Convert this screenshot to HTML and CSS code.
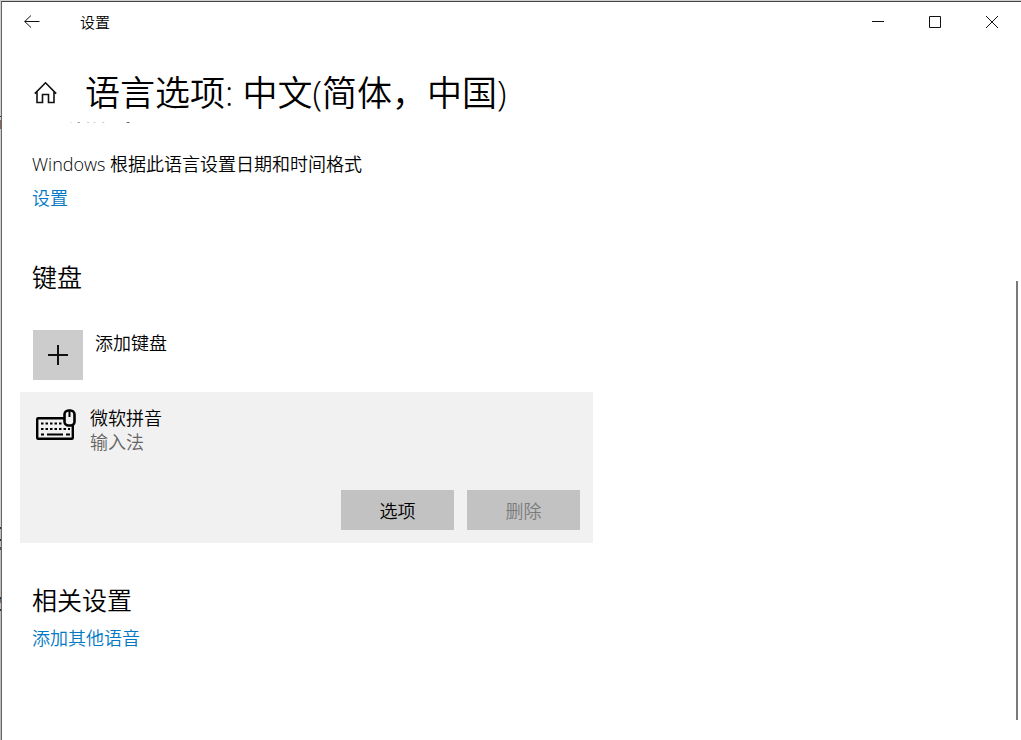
FILE: index.html
```html
<!DOCTYPE html>
<html lang="zh-CN">
<head>
  <meta charset="UTF-8" />
  <title>设置</title>
  <link rel="stylesheet" href="styles.css">
</head>
<body>

<div class="window">
  <header class="titlebar">
    <button class="back" aria-label="返回">
      <svg width="16" height="14" viewBox="0 0 16 14"><path d="M7 0.5L0.7 6.5L7 12.5M0.7 6.5H15.5" /></svg>
    </button>
    <span class="app-name">设置</span>
    <div class="controls">
      <button aria-label="最小化">
        <svg width="12" height="12" viewBox="0 0 12 12"><path d="M0 5.5H12" /></svg>
      </button>
      <button aria-label="最大化">
        <svg width="12" height="12" viewBox="0 0 12 12"><path d="M0.5 0.5H11.5V11.5H0.5Z" /></svg>
      </button>
      <button aria-label="关闭">
        <svg width="12" height="12" viewBox="0 0 12 12"><path d="M0 0L12 12M12 0L0 12" /></svg>
      </button>
    </div>
  </header>

  <div class="page-head">
    <button class="home" aria-label="主页">
      <svg width="24" height="24" viewBox="0 0 24 24"><path d="M0.8 12.6L11.5 1.8L22.2 12.6M3 11V21.5H8.5V13.5H14.5V21.5H20V11" /></svg>
    </button>
    <h1>语言选项: 中文(简体，中国)</h1>
  </div>

  <main class="content">
    <section class="region">
      <h2>区域格式</h2>
      <p>Windows 根据此语言设置日期和时间格式</p>
      <a href="#">设置</a>
    </section>

    <section class="keyboards">
      <h2>键盘</h2>
      <button class="add">
        <span class="add-tile">
          <svg width="20" height="20" viewBox="0 0 20 20"><path d="M10 0V20M0 10H20" /></svg>
        </span>
        <span>添加键盘</span>
      </button>

      <div class="card">
        <div class="ime">
          <svg class="keyboard" width="42" height="32" viewBox="0 0 42 32">
            <rect class="body" x="2.2" y="9.2" width="35.6" height="20.6" rx="1" />
            <path class="keys" d="M6 14.5H28M6 20H35" />
            <path class="space" d="M6 25.5H9M12 25.5H28M31 25.5H35" />
            <rect class="mouse" x="29.5" y="1.5" width="10" height="15" rx="4" />
            <path class="wheel" d="M34.5 2V8" />
          </svg>
          <div>
            <div>微软拼音</div>
            <div class="kind">输入法</div>
          </div>
        </div>
        <div class="actions">
          <button>选项</button>
          <button disabled>删除</button>
        </div>
      </div>
    </section>

    <section class="related">
      <h2>相关设置</h2>
      <a href="#">添加其他语音</a>
    </section>

    <div class="scrollbar"></div>
  </main>
</div>

</body>
</html>
```
FILE: styles.css
```css
* { box-sizing: border-box; }
html, body {
  margin: 0;
  height: 100%;
}
body {
  padding: 1px 0 0 1px;
  /* bits of the window behind show along the left edge */
  background: linear-gradient(
    #cfcfcf 116px, #333 116px, #333 117px, #cfcfcf 117px, #cfcfcf 120px,
    #8a6a5c 120px, #8a6a5c 129px, #cfcfcf 129px, #cfcfcf 527px,
    #333 527px, #333 529px, #bbb 529px, #bbb 539px, #333 539px, #333 541px,
    #bbb 541px, #bbb 547px, #555 547px, #555 550px, #bbb 550px, #bbb 597px,
    #333 597px, #333 599px, #3a7ab0 599px, #3a7ab0 601px, #b06040 601px,
    #b06040 603px, #bbb 603px, #bbb 609px, #333 609px, #333 611px, #bbb 611px);
  color: #000;
  font-family: "Open Sans", "Noto Sans CJK SC", sans-serif;
  font-size: 18px;
  line-height: 24px;
  font-weight: 350;
  overflow: hidden;
}
h1, h2, p { margin: 0; font-weight: inherit; }
button {
  padding: 0;
  border: none;
  background: none;
  color: inherit;
  font: inherit;
}
svg {
  display: block;
  fill: none;
  stroke: #111;
}
a {
  color: #0078c4;
  text-decoration: none;
}
.window {
  display: flex;
  flex-direction: column;
  height: 100%;
  border-top: 1px solid #444;
  border-left: 1px solid #666;
  background-color: #fff;
}
.titlebar {
  display: flex;
  align-items: center;
  height: 40px;
  padding: 0 1px 0 22px;
}
.app-name {
  margin-left: 40px;
  font-size: 15px;
}
.controls {
  display: flex;
  margin-left: auto;
}
.controls button {
  display: grid;
  place-items: center;
  width: 57px;
  height: 40px;
}
.page-head {
  display: flex;
  align-items: center;
  height: 80px;
  padding: 22px 0 0 32px;
}
.home svg { stroke-width: 1.6; }
h1 {
  margin-left: 27px;
  font-size: 35px;
  line-height: 48px;
}
.content {
  position: relative;
  flex: 1;
  min-height: 0;
  padding-left: 30px;
  overflow: hidden;
}
h2 {
  font-size: 25px;
  line-height: 32px;
}
.region h2 { margin-top: -28px; }
.region p { margin: 26px 0 10px; }
.keyboards { margin-top: 51px; }
.add {
  display: flex;
  gap: 12px;
  margin: 37px 0 12px 1px;
}
.add span:last-child { margin-top: 1px; }
.add-tile {
  display: grid;
  place-items: center;
  width: 50px;
  height: 50px;
  background-color: #ccc;
}
.add-tile svg { stroke-width: 2; }
.card {
  max-width: 573px;
  margin-left: -12px;
  padding: 14px 13px 13px 15px;
  background-color: #f1f1f1;
}
.ime {
  display: flex;
  gap: 13px;
}
.keyboard { margin-top: 3px; }
.keyboard path, .keyboard rect { stroke: #000; stroke-width: 2; }
.keyboard .body { stroke-width: 2.4; }
.keyboard .keys { stroke-dasharray: 2.5 2; }
.keyboard .mouse { fill: #f1f1f1; stroke-width: 2.6; }
.kind { color: #666; }
.actions {
  display: flex;
  justify-content: flex-end;
  gap: 13px;
  margin-top: 36px;
}
.actions button {
  width: 113px;
  height: 40px;
  padding-top: 2px;
  background-color: #c2c2c2;
}
.actions button:disabled { color: #7a7a7a; }
.related { margin-top: 41px; }
.related a {
  display: inline-block;
  margin-top: 10px;
}
.scrollbar {
  position: absolute;
  top: 159px;
  right: 3px;
  bottom: 20px;
  width: 2px;
  background-color: #7a7a7a;
}
```
